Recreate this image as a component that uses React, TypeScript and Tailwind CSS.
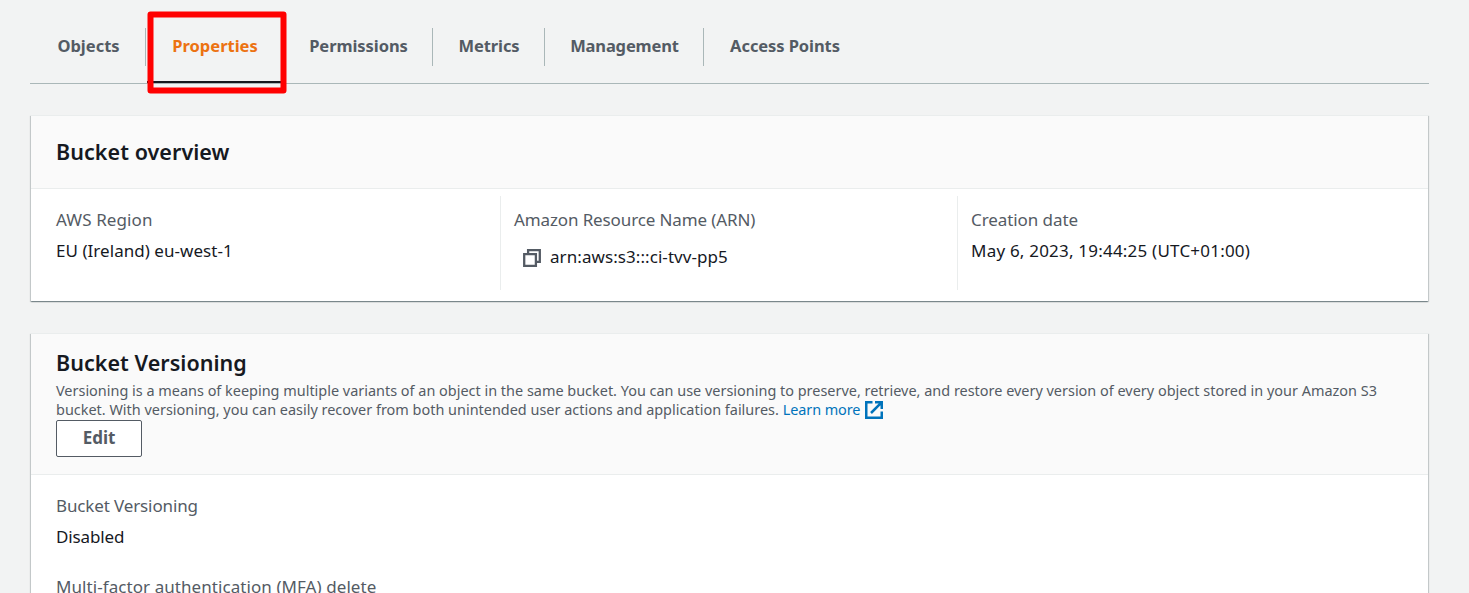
import React from "react";

const tabs = [
  { label: "Objects", box: "w-[116px] border-r", text: "left-[1px]" },
  { label: "Properties", box: "w-[138px]", text: "text-[#ec7211]" },
  { label: "Permissions", box: "w-[149px] border-r", text: "left-[0.5px] tracking-[-0.06px]" },
  { label: "Metrics", box: "w-[112px] border-r", text: "left-[0.5px] tracking-[-0.1px]" },
  { label: "Management", box: "w-[159px] border-r", text: "left-[0.5px] tracking-[-0.15px]" },
  { label: "Access Points", box: "w-[161px]", text: "left-[0.5px] tracking-[-0.08px]" },
];

function Tabs() {
  return (
    <nav className="flex h-[84px] items-start border-b border-[#aab7b8] pt-[28px]">
      {tabs.map((t) => (
        <div
          key={t.label}
          className={`relative flex h-[38px] shrink-0 items-center justify-center border-[#aab7b8] text-[16.5px] leading-[25px] font-bold text-[#545b64] ${t.box}`}
        >
          <span className={`relative -top-[2px] whitespace-nowrap ${t.text}`}>{t.label}</span>
          {t.label === "Properties" && (
            <>
              <span className="absolute top-[53px] left-[1px] h-[2px] w-[137px] bg-[#16191f]" />
              <svg className="absolute -top-[18px] left-0 z-10" width="142" height="86" viewBox="0 0 142 86" fill="none">
                <rect x="4.5" y="4.5" width="133" height="76" stroke="#ff0000" strokeWidth="6" strokeLinejoin="round" />
              </svg>
            </>
          )}
        </div>
      ))}
    </nav>
  );
}

function CopyIcon() {
  return (
    <svg className="relative top-[0.5px]" width="18" height="18" viewBox="0 0 18 18" fill="none" stroke="#545b64" strokeWidth="2.3">
      <path d="M5.1 5V1.2h11.7v11.7H13" />
      <path d="M1.2 5.1h11.7v11.7H1.2z" />
    </svg>
  );
}

function ExternalIcon() {
  return (
    <svg width="18" height="18" viewBox="0 0 18 18" fill="none" stroke="#0073bb" strokeWidth="2.5">
      <path d="M7.5 1.25H1.25v15.5h15.5v-6.3" />
      <path d="M10 1.25h6.75V8M16.6 1.4 6 12" />
    </svg>
  );
}

const card =
  "border-t border-[#eaeded] bg-white shadow-[0_1px_1px_0_rgba(0,28,36,0.3),1px_1px_1px_0_rgba(0,28,36,0.15),-1px_1px_1px_0_rgba(0,28,36,0.15)]";

export default function App() {
  return (
    <div className="h-[593px] w-[1469px] overflow-hidden bg-[#f2f3f3] pr-[40px] pl-[30px] font-['Noto_Sans',sans-serif] text-[17px] text-[#16191f]">
      <Tabs />
      <section className={`mx-px mt-[31px] h-[186px] ${card}`}>
        <header className="flex h-[73px] items-center border-b border-[#eaeded] bg-[#fafafa] pl-[25px]">
          <h2 className="text-[21.5px] leading-[28px] font-semibold tracking-[0.06px]">Bucket overview</h2>
        </header>
        <div className="flex pt-[7px] leading-[28px]">
          <div className="h-[94px] w-[470px] border-r border-[#eaeded] pt-[10px] pl-[25px]">
            <div className="tracking-[0.1px] text-[#545b64]">AWS Region</div>
            <div className="mt-[3px] tracking-[0.04px]">EU (Ireland) eu-west-1</div>
          </div>
          <div className="h-[94px] w-[457px] border-r border-[#eaeded] pt-[10px] pl-[13px]">
            <div className="tracking-[-0.12px] text-[#545b64]">Amazon Resource Name (ARN)</div>
            <div className="mt-[9px] flex items-center gap-[9px] pl-[9px]">
              <CopyIcon />
              <span className="tracking-[0.07px]">arn:aws:s3:::ci-tvv-pp5</span>
            </div>
          </div>
          <div className="pt-[10px] pl-[13px]">
            <div className="tracking-[-0.08px] text-[#545b64]">Creation date</div>
            <div className="mt-[3px] tracking-[0.21px]">May 6, 2023, 19:44:25 (UTC+01:00)</div>
          </div>
        </div>
      </section>
      <section className={`mx-px mt-[32px] h-[300px] ${card}`}>
        <header className="h-[141px] border-b border-[#eaeded] bg-[#fafafa] pt-[15px] pl-[25px]">
          <h2 className="text-[21.5px] leading-[28px] font-semibold tracking-[0.04px]">Bucket Versioning</h2>
          <div className="mt-[4px] text-[14.45px] leading-[19px] whitespace-nowrap text-[#545b64]">
            <div>Versioning is a means of keeping multiple variants of an object in the same bucket. You can use versioning to preserve, retrieve, and restore every version of every object stored in your Amazon S3</div>
            <div className="flex items-center">
              <span>bucket. With versioning, you can easily recover from both unintended user actions and application failures.</span>
              <a className="ml-[4px] flex items-center gap-[5px] text-[#0073bb]">
                <span className="tracking-[-0.1px]">Learn more</span>
                <ExternalIcon />
              </a>
            </div>
          </div>
          <button className="mt-px flex h-[37px] w-[86px] items-center justify-center rounded-[2px] border border-[#545b64] bg-white pb-[2px] font-bold text-[#545b64]">
            Edit
          </button>
        </header>
        <div className="pt-[17px] pl-[25px] leading-[28px]">
          <div className="tracking-[-0.13px] text-[#545b64]">Bucket Versioning</div>
          <div className="mt-[3px] tracking-[-0.12px]">Disabled</div>
          <div className="mt-[22px] tracking-[0.07px] text-[#545b64]">Multi-factor authentication (MFA) delete</div>
        </div>
      </section>
    </div>
  );
}
